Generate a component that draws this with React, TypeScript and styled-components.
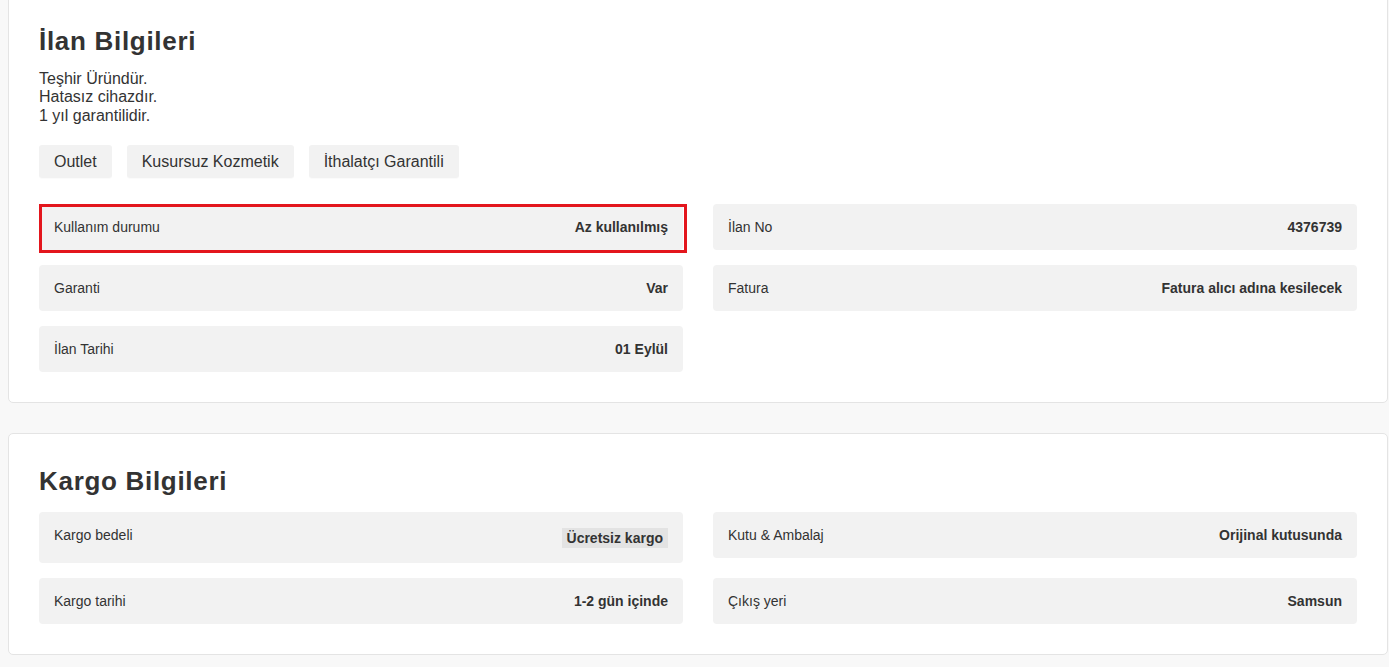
import React from "react";
import styled, { createGlobalStyle } from "styled-components";

const GlobalStyle = createGlobalStyle`
  html, body {
    margin: 0;
    padding: 0;
    background: #f8f8f8;
  }
  body {
    font-family: "Liberation Sans", Arial, sans-serif;
    color: #333;
  }
`;

const Page = styled.div`
  display: flex;
  flex-direction: column;
  gap: 30px;
  padding: 0 1px 12px 8px;
  margin-top: -7px;
`;

const Card = styled.section`
  background: #fff;
  border: 1px solid #e4e4e4;
  border-radius: 5px;
  padding: 30px;
  display: flex;
  flex-direction: column;
`;

const Title = styled.h2`
  margin: 2px 0 0;
  font-size: 26px;
  line-height: 30px;
  font-weight: 700;
  letter-spacing: 0.7px;
  color: #333;
`;

const Description = styled.div`
  margin-top: 14px;
  font-size: 16px;
  line-height: 18.4px;
  color: #333;
`;

const Tags = styled.div`
  display: flex;
  gap: 15px;
  margin-top: 20px;
`;

const Tag = styled.span`
  background: #f2f2f2;
  border-radius: 3px;
  padding: 7px 15px;
  font-size: 16px;
  line-height: 19px;
  color: #333;
  box-shadow: 0 1px 1px rgba(0, 0, 0, 0.02);
`;

const Grid = styled.div<{ $top: number }>`
  display: grid;
  grid-template-columns: 1fr 1fr;
  column-gap: 30px;
  row-gap: 15px;
  align-items: start;
  margin-top: ${(p) => p.$top}px;
`;

const Row = styled.div<{ $highlight?: boolean; $top?: boolean }>`
  position: relative;
  display: flex;
  justify-content: space-between;
  align-items: ${(p) => (p.$top ? "flex-start" : "center")};
  background: #f2f2f2;
  border-radius: 4px;
  padding: 15px;
  font-size: 14px;
  line-height: 16px;
  min-height: 46px;
  box-sizing: border-box;

  ${(p) =>
    p.$highlight &&
    `
    &::after {
      content: "";
      position: absolute;
      top: 0;
      left: 0;
      right: -4px;
      bottom: -3px;
      border: 3px solid #e3161d;
      pointer-events: none;
    }
  `}
`;

const Label = styled.span`
  color: #333;
  font-weight: 400;
`;

const Value = styled.span`
  font-weight: 700;
  color: #333;
`;

const Badge = styled.span`
  font-weight: 700;
  color: #333;
  background: #e3e3e3;
  padding: 2px 5px;
  margin-top: 1px;
  line-height: 16px;
`;

const Empty = styled.div``;

type Item = { label: string; value: string; highlight?: boolean; badge?: boolean };

const ilan: Item[] = [
  { label: "Kullanım durumu", value: "Az kullanılmış", highlight: true },
  { label: "İlan No", value: "4376739" },
  { label: "Garanti", value: "Var" },
  { label: "Fatura", value: "Fatura alıcı adına kesilecek" },
  { label: "İlan Tarihi", value: "01 Eylül" },
];

const kargo: Item[] = [
  { label: "Kargo bedeli", value: "Ücretsiz kargo", badge: true },
  { label: "Kutu & Ambalaj", value: "Orijinal kutusunda" },
  { label: "Kargo tarihi", value: "1-2 gün içinde" },
  { label: "Çıkış yeri", value: "Samsun" },
];

const InfoRow = ({ item }: { item: Item }) => (
  <Row $highlight={item.highlight} $top={item.badge}>
    <Label>{item.label}</Label>
    {item.badge ? <Badge>{item.value}</Badge> : <Value>{item.value}</Value>}
  </Row>
);

export default function App() {
  return (
    <>
      <GlobalStyle />
      <Page>
        <Card>
          <Title>İlan Bilgileri</Title>
          <Description>
            Teşhir Üründür.
            <br />
            Hatasız cihazdır.
            <br />
            1 yıl garantilidir.
          </Description>
          <Tags>
            <Tag>Outlet</Tag>
            <Tag>Kusursuz Kozmetik</Tag>
            <Tag>İthalatçı Garantili</Tag>
          </Tags>
          <Grid $top={26}>
            {ilan.map((it) => (
              <InfoRow key={it.label} item={it} />
            ))}
            <Empty />
          </Grid>
        </Card>
        <Card>
          <Title>Kargo Bilgileri</Title>
          <Grid $top={16}>
            {kargo.map((it) => (
              <InfoRow key={it.label} item={it} />
            ))}
          </Grid>
        </Card>
      </Page>
    </>
  );
}
